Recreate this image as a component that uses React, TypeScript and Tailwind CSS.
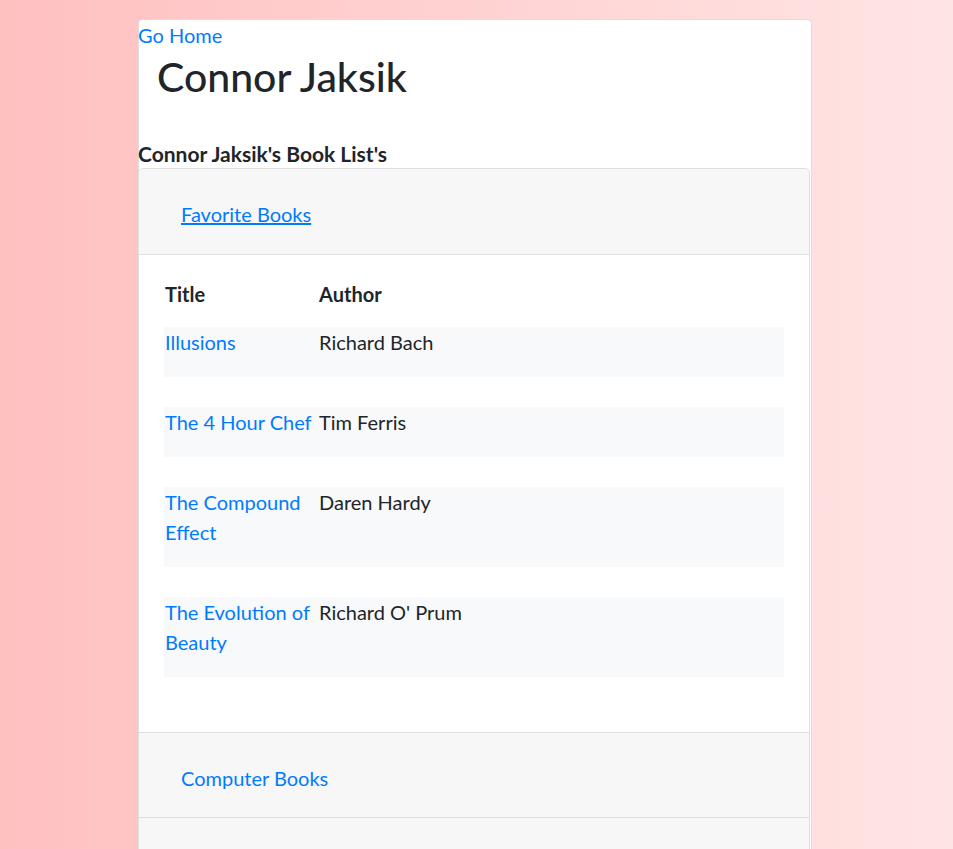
import React from 'react';

const books = [
  { title: 'Illusions', author: 'Richard Bach' },
  { title: 'The 4 Hour Chef', author: 'Tim Ferris' },
  { title: 'The Compound Effect', author: 'Daren Hardy' },
  { title: 'The Evolution of Beauty', author: "Richard O' Prum" },
];

function BookTable() {
  return (
    <div className="px-[25px] pt-[24px] pb-[25px]">
      <div className="grid grid-cols-[155px_1fr] text-[20px] leading-[30px] font-bold text-[#212529] mb-[18px]">
        <div className="pl-px">Title</div>
        <div>Author</div>
      </div>
      {books.map((b) => (
        <div
          key={b.title}
          className="grid grid-cols-[155px_1fr] bg-[#f8f9fa] pb-[20px] mb-[30px] text-[20px] leading-[30px]"
        >
          <a href="#" className="pl-px pr-[6px] text-[#007bff]">
            {b.title}
          </a>
          <div className="text-[#212529]">{b.author}</div>
        </div>
      ))}
    </div>
  );
}

export default function App() {
  return (
    <div
      className="min-h-[849px] bg-gradient-to-r from-[#ffc0c0] to-[#ffe5e5] pt-[19px]"
      style={{ fontFamily: 'Lato, sans-serif' }}
    >
      <div className="ml-[138px] w-[674px] bg-white border border-[#dedede] rounded-t-[5px] border-b-0">
        <a href="#" className="block text-[20px] leading-[30px] text-[#007bff] -ml-px">
          Go Home
        </a>
        <h1 className="pl-[18px] text-[41px] leading-[53px] font-medium text-[#212529]">Connor Jaksik</h1>
        <h5 className="mt-[37px] text-[21px] leading-[28px] font-bold text-[#212529] -ml-px">
          Connor Jaksik's Book List's
        </h5>
        <div className="-ml-px w-[672px] border border-[#dfdfdf] rounded-t-[5px]">
          <div className="bg-[#f7f7f7] pl-[42px] pt-[30px] pb-[25px] border-b border-[#dfdfdf] rounded-t-[5px]">
            <a href="#" className="text-[20px] leading-[30px] text-[#007bff] underline">
              Favorite Books
            </a>
          </div>
          <div className="bg-white">
            <BookTable />
          </div>
          <div className="bg-[#f7f7f7] pl-[42px] pt-[30px] pb-[24px] border-t border-b border-[#dfdfdf]">
            <a href="#" className="text-[20px] leading-[30px] text-[#007bff]">
              Computer Books
            </a>
          </div>
          <div className="bg-[#f7f7f7] h-[60px]"></div>
        </div>
      </div>
    </div>
  );
}
